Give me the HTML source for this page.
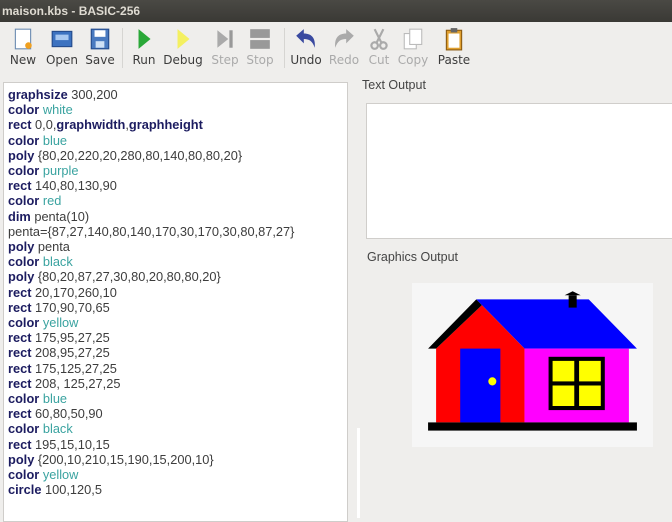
<!DOCTYPE html>
<html><head><meta charset="utf-8"><style>
*{margin:0;padding:0;box-sizing:border-box}
body{width:672px;height:517px;overflow:hidden;background:#efeeec;font-family:"DejaVu Sans","Liberation Sans",sans-serif;position:relative}
.title{position:absolute;left:0;top:0;width:672px;height:22px;background:linear-gradient(#4a4944,#3a3935);color:#dfdbd2;font-weight:bold;font-size:12px;line-height:22px;padding-left:2px;font-family:"Liberation Sans",sans-serif}
.tb{position:absolute;top:22px;left:0;width:672px;height:54px;background:#efeeec}
.btn{position:absolute;top:0;width:44px;text-align:center;font-size:12px;color:#3c3c3c}
.btn svg{display:block;margin:5px auto 0;width:24px;height:24px}
.btn span{display:block;margin-top:2px}
.dis{color:#aaa}
.sep{position:absolute;top:6px;width:1px;height:40px;background:#d6d5d2}
.ed{position:absolute;left:3px;top:82px;width:345px;height:440px;background:#fff;border:1px solid #cfcdca;padding:4px 0 0 4px;font-family:"Liberation Sans",sans-serif;font-size:12.8px;line-height:15.2px;color:#3d3d3d;white-space:pre}
b{color:#1c1c60}
i{font-style:normal;color:#3aa3a0}
.lbl{position:absolute;font-size:12.5px;color:#444;font-family:"Liberation Sans",sans-serif}
.to{position:absolute;left:366px;top:103px;width:310px;height:136px;background:#fff;border:1px solid #d0cecb}
.strip{position:absolute;left:357px;top:428px;width:3px;height:90px;background:#fff}
</style></head><body>
<div class="title">maison.kbs - BASIC-256</div>
<div class="tb">
<div class="btn" style="left:1px"><svg viewBox="0 0 22 22"><rect x="4" y="2" width="14" height="18" fill="#fff" stroke="#6a8ab0"/><circle cx="16" cy="17" r="3" fill="#f0a020"/></svg><span>New</span></div>
<div class="btn" style="left:40px"><svg viewBox="0 0 22 22"><rect x="2" y="4" width="18" height="14" fill="#3c72c0" stroke="#234a8a"/><rect x="5" y="7" width="12" height="5" fill="#a8c8f0"/></svg><span>Open</span></div>
<div class="btn" style="left:78px"><svg viewBox="0 0 22 22"><rect x="3" y="2" width="16" height="18" fill="#4a7ac0" stroke="#234a8a"/><rect x="6" y="3" width="10" height="6" fill="#fff"/><rect x="7" y="13" width="8" height="6" fill="#cfe0f5"/></svg><span>Save</span></div>
<div class="sep" style="left:122px"></div>
<div class="btn" style="left:122px"><svg viewBox="0 0 22 22"><path d="M6 2 L17 11 L6 20Z" fill="#2aa838"/></svg><span>Run</span></div>
<div class="btn" style="left:161px"><svg viewBox="0 0 22 22"><path d="M6 2 L17 11 L6 20Z" fill="#f4f060"/></svg><span>Debug</span></div>
<div class="btn dis" style="left:203px"><svg viewBox="0 0 22 22"><path d="M4 3 L14 11 L4 19Z" fill="#aaa"/><rect x="15" y="3" width="3" height="16" fill="#999"/></svg><span>Step</span></div>
<div class="btn dis" style="left:238px"><svg viewBox="0 0 22 22"><rect x="2" y="2" width="18" height="8" fill="#999"/><rect x="2" y="12" width="18" height="8" fill="#999"/></svg><span>Stop</span></div>
<div class="sep" style="left:284px"></div>
<div class="btn" style="left:284px"><svg viewBox="0 0 22 22"><path d="M2 8 L9 2 L9 6 C16 6 20 10 19 19 C17 13 14 11 9 11 L9 15Z" fill="#3a4aa0"/></svg><span>Undo</span></div>
<div class="btn dis" style="left:322px"><svg viewBox="0 0 22 22"><path d="M20 8 L13 2 L13 6 C6 6 2 10 3 19 C5 13 8 11 13 11 L13 15Z" fill="#aaa"/></svg><span>Redo</span></div>
<div class="btn dis" style="left:357px"><svg viewBox="0 0 22 22"><path d="M7 2 L13 14 M15 2 L9 14" stroke="#aaa" stroke-width="2"/><circle cx="7" cy="17" r="3" fill="none" stroke="#aaa" stroke-width="2"/><circle cx="15" cy="17" r="3" fill="none" stroke="#aaa" stroke-width="2"/></svg><span>Cut</span></div>
<div class="btn dis" style="left:391px"><svg viewBox="0 0 22 22"><rect x="3" y="6" width="11" height="14" fill="#fff" stroke="#bbb"/><rect x="8" y="2" width="11" height="14" fill="#fff" stroke="#bbb"/></svg><span>Copy</span></div>
<div class="btn" style="left:432px"><svg viewBox="0 0 22 22"><rect x="4" y="3" width="14" height="18" fill="#e0a030" stroke="#8a5a10"/><rect x="6" y="6" width="10" height="13" fill="#fff"/><rect x="8" y="1" width="6" height="4" fill="#666"/></svg><span>Paste</span></div>
</div>
<div class="ed"><b>graphsize</b> 300,200
<b>color</b> <i>white</i>
<b>rect</b> 0,0,<b>graphwidth</b>,<b>graphheight</b>
<b>color</b> <i>blue</i>
<b>poly</b> {80,20,220,20,280,80,140,80,80,20}
<b>color</b> <i>purple</i>
<b>rect</b> 140,80,130,90
<b>color</b> <i>red</i>
<b>dim</b> penta(10)
penta={87,27,140,80,140,170,30,170,30,80,87,27}
<b>poly</b> penta
<b>color</b> <i>black</i>
<b>poly</b> {80,20,87,27,30,80,20,80,80,20}
<b>rect</b> 20,170,260,10
<b>rect</b> 170,90,70,65
<b>color</b> <i>yellow</i>
<b>rect</b> 175,95,27,25
<b>rect</b> 208,95,27,25
<b>rect</b> 175,125,27,25
<b>rect</b> 208, 125,27,25
<b>color</b> <i>blue</i>
<b>rect</b> 60,80,50,90
<b>color</b> <i>black</i>
<b>rect</b> 195,15,10,15
<b>poly</b> {200,10,210,15,190,15,200,10}
<b>color</b> <i>yellow</i>
<b>circle</b> 100,120,5</div>
<div class="lbl" style="left:362px;top:78px">Text Output</div>
<div class="to"></div>
<div class="lbl" style="left:367px;top:250px">Graphics Output</div>
<div class="strip"></div>
<svg style="position:absolute;left:412px;top:283px" width="241" height="164" viewBox="0 0 300 200" preserveAspectRatio="none">
<rect width="300" height="200" fill="#f6f6f6"/>
<polygon points="80,20 220,20 280,80 140,80 80,20" fill="#0000ff"/>
<rect x="140" y="80" width="130" height="90" fill="#ff00ff"/>
<polygon points="87,27 140,80 140,170 30,170 30,80 87,27" fill="#ff0000"/>
<polygon points="80,20 87,27 30,80 20,80 80,20" fill="#000"/>
<rect x="20" y="170" width="260" height="10" fill="#000"/>
<rect x="170" y="90" width="70" height="65" fill="#000"/>
<rect x="175" y="95" width="27" height="25" fill="#ff0"/>
<rect x="208" y="95" width="27" height="25" fill="#ff0"/>
<rect x="175" y="125" width="27" height="25" fill="#ff0"/>
<rect x="208" y="125" width="27" height="25" fill="#ff0"/>
<rect x="60" y="80" width="50" height="90" fill="#0000ff"/>
<rect x="195" y="15" width="10" height="15" fill="#000"/>
<polygon points="200,10 210,15 190,15 200,10" fill="#000"/>
<circle cx="100" cy="120" r="5" fill="#ff0"/>
</svg>
</body></html>
